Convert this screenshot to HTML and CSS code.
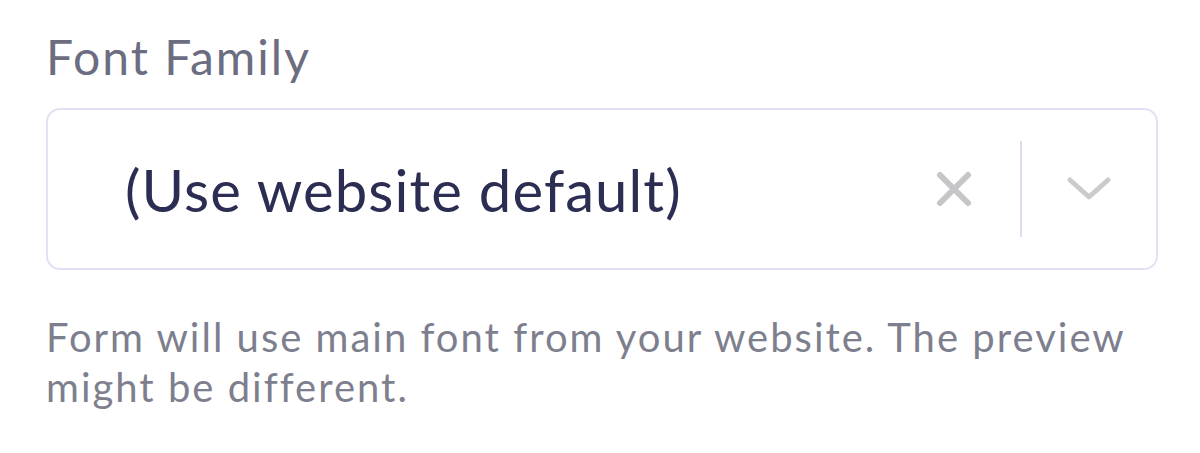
FILE: index.html
```html
<!DOCTYPE html>
<html lang="en">
<head>
<meta charset="UTF-8">
<meta name="viewport" content="width=device-width, initial-scale=1.0">
<title>Font Family</title>
<link rel="stylesheet" href="styles.css">
</head>
<body>
<div class="field">
<label class="field-label">Font Family</label>
<div class="select">
<div class="select-value">(Use website default)</div>
<div class="select-icons">
<span class="icon-clear">
<svg width="38" height="38" viewBox="0 0 38 38"><path d="M5 5 L33 33 M33 5 L5 33" stroke="#c6c6c8" stroke-width="6" stroke-linecap="round" fill="none"/></svg>
</span>
<span class="divider"></span>
<span class="icon-arrow">
<svg width="46" height="26" viewBox="0 0 46 26"><path d="M4 4 L23 21 L42 4" stroke="#cbcbcd" stroke-width="5" stroke-linecap="round" stroke-linejoin="round" fill="none"/></svg>
</span>
</div>
</div>
<p class="help">Form will use main font from your website. The preview might be different.</p>
</div>
</body>
</html>
```

FILE: styles.css
```css
body { margin: 0; background: #ffffff; font-family: Lato, "Liberation Sans", sans-serif; }
.field { width: 1112px; padding: 27px 0 0 46px; }
.field-label { display: block; font-size: 48px; color: #6c6d80; line-height: 60px; letter-spacing: 2px; }
.select { margin-top: 21px; height: 158px; border: 2px solid #e2e2f6; border-radius: 14px; display: flex; align-items: center; justify-content: space-between; }
.select-value { padding-left: 77px; font-size: 58px; color: #2b2d52; letter-spacing: 1.1px; }
.select-icons { display: flex; align-items: center; height: 100%; }
.icon-clear { display: flex; margin-right: 47px; }
.divider { width: 2px; height: 96px; background: #dcdcf1; }
.icon-arrow { display: flex; padding: 0 44px 0 44px; }
.help { margin: 42px 0 0; font-size: 40px; line-height: 50px; color: #7e7f8e; letter-spacing: 2px; }
```
